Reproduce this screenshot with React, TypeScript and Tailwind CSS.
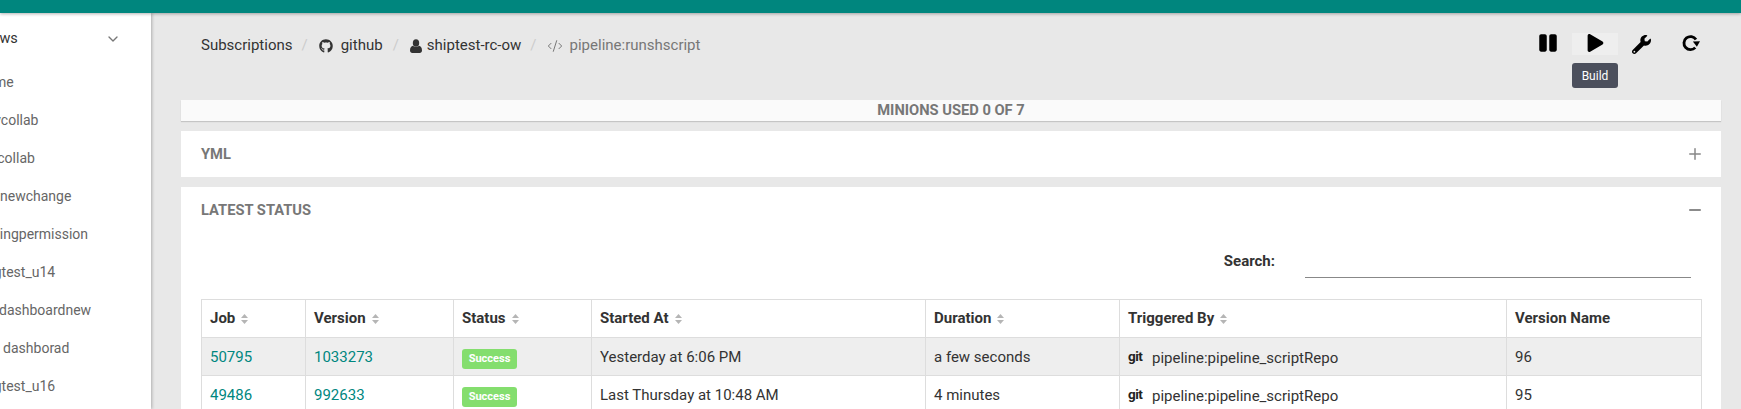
import React from 'react';
import { ChevronDown, Plus, Minus, CodeXml } from 'lucide-react';
import { FaPause, FaPlay, FaWrench, FaGithub } from 'react-icons/fa';

const navItems = [
  { label: 'Home', className: 'ml-[-24px]' },
  { label: 'mycollab', className: 'ml-[-18px]' },
  { label: 'mcollab', className: 'ml-[-15px]' },
  { label: 'newchange', className: 'ml-[0px]' },
  { label: 'testingpermission', className: 'ml-[-24px]' },
  { label: 'ngtest_u14', className: 'ml-[-14px]' },
  { label: 'dashboardnew', className: 'ml-[-1px]' },
  { label: 'a dashborad', className: 'ml-[-8px]' },
  { label: 'ngtest_u16', className: 'ml-[-14px]' },
];

const rows = [
  { job: '50795', version: '1033273', started: 'Yesterday at 6:06 PM', duration: 'a few seconds', name: '96' },
  { job: '49486', version: '992633', started: 'Last Thursday at 10:48 AM', duration: '4 minutes', name: '95' },
];

const SortIcon = () => (
  <svg width="9" height="12" viewBox="0 0 9 12" className="inline-block ml-[5px] text-[#b5b5b5]" fill="currentColor">
    <path d="M4.5 1 8 5H1z" />
    <path d="M4.5 11 1 7h7z" />
  </svg>
);

const UserIcon = () => (
  <svg width="12" height="14" viewBox="0 0 12 14" className="mr-[5px] text-[#333]" fill="currentColor">
    <ellipse cx="6" cy="4" rx="3.2" ry="3.8" />
    <path d="M0 11.5C0 8.8 1.2 7 3 6.8c.7.7 1.8 1.1 3 1.1s2.3-.4 3-1.1c1.8.2 3 2 3 4.7 0 1.6-1 2.5-2.3 2.5H2.3C1 14 0 13.100 0 11.500z" />
  </svg>
);

const RefreshIcon = () => (
  <svg width="19" height="19" viewBox="0 0 16 16" className="text-black">
    <path d="M12 12.300A5.500 5.500 0 1 1 12.600 5.500" fill="none" stroke="currentColor" strokeWidth="2.400" />
    <path d="M10 7.200 16 7 13.400 11.500z" fill="currentColor" />
  </svg>
);

const Th = ({ label, sort = true }: { label: string; sort?: boolean }) => (
  <th className="border border-[#ddd] px-[8px] text-left font-bold text-[#333] h-[38px]">
    {label}
    {sort && <SortIcon />}
  </th>
);

const Td = ({ children }: { children: React.ReactNode }) => (
  <td className="border border-[#ddd] px-[8px] pt-[2px] h-[38px]">{children}</td>
);

const App = () => {
  return (
    <div className="w-[1741px] h-[409px] overflow-hidden bg-[#e8e8e8] flex flex-col text-[15px] text-[#333] font-['Roboto',sans-serif]">
      <div className="h-[13px] shrink-0 bg-[#00867e] shadow-[0_1px_3px_rgba(0,0,0,0.3)] z-10" />

      <div className="flex flex-1 min-h-0">
        {/* sidebar */}
        <aside className="w-[151px] shrink-0 bg-white overflow-hidden shadow-[1px_0_3px_rgba(0,0,0,0.25)] text-[#666] text-[14px]">
          <div className="flex items-center justify-between h-[20px] mt-[16px] pr-[30px] text-[#333] text-[14.500px]">
            <span className="ml-[-21px]">Views</span>
            <ChevronDown className="w-[16px] h-[16px] text-[#777]" />
          </div>
          <ul className="mt-[14px]">
            {navItems.map((item) => (
              <li key={item.label} className={`h-[38px] leading-[38px] whitespace-nowrap ${item.className}`}>
                {item.label}
              </li>
            ))}
          </ul>
        </aside>

        {/* main */}
        <main className="flex-1 min-w-0 pl-[30px] pr-[20px]">
          <div className="flex justify-between h-[87px]">
            <nav className="flex items-center h-[65px] pl-[20px] text-[#333]">
              <span>Subscriptions</span>
              <span className="mx-[9px] text-[#ccc]">/</span>
              <FaGithub className="w-[14px] h-[14px] mr-[8px] ml-[2px]" />
              <span>github</span>
              <span className="mx-[10px] text-[#ccc]">/</span>
              <span className="ml-[1px]"><UserIcon /></span>
              <span>shiptest-rc-ow</span>
              <span className="mx-[9px] text-[#ccc]">/</span>
              <CodeXml className="w-[18px] h-[16px] mr-[6px] text-[#777]" strokeWidth={1.500} />
              <span className="text-[#777]">pipeline:runshscript</span>
            </nav>

            <div className="flex items-start pt-[20px] pr-[6px]">
              <button className="w-[46px] h-[22px] pb-[2px] flex items-center justify-center text-black">
                <FaPause className="w-[20px] h-[20px]" />
              </button>
              <div className="relative w-[46px] h-[22px] pb-[2px] ml-[1px] bg-[#eeeeee] flex items-center justify-center text-black">
                <FaPlay className="w-[17px] h-[18px]" />
                <div className="absolute left-0 top-[30px] w-[46px] h-[25px] rounded-[3px] bg-[#4b4f5c] text-white text-[12px] flex items-center justify-center">
                  Build
                </div>
              </div>
              <button className="w-[47px] h-[22px] flex items-center justify-center text-black">
                <FaWrench className="w-[19px] h-[19px]" />
              </button>
              <button className="w-[50px] h-[22px] pb-[3px] flex items-center justify-center">
                <RefreshIcon />
              </button>
            </div>
          </div>

          <div className="h-[21px] bg-[#fafafa] shadow-[0_1px_1px_rgba(0,0,0,0.15)] flex items-center justify-center text-[14.700px] font-bold text-[#777]">
            MINIONS USED 0 OF 7
          </div>

          <div className="mt-[10px] h-[46px] bg-white flex items-center justify-between pl-[20px] pr-[17px] text-[14.700px] font-bold text-[#777]">
            <span>YML</span>
            <Plus className="w-[18px] h-[18px] text-[#888]" />
          </div>

          <section className="mt-[10px] bg-white px-[20px] h-[300px]">
            <div className="h-[46px] flex items-center justify-between text-[14.700px] font-bold text-[#777]">
              <span>LATEST STATUS</span>
              <Minus className="w-[18px] h-[18px] text-[#666] mr-[-3px]" />
            </div>

            <div className="flex justify-end items-start h-[66px] pr-[10px]">
              <label className="font-bold text-[#333] mt-[17px] text-[15px] leading-[22px]">Search:</label>
              <div className="w-[386px] h-[45px] ml-[30px] border-b border-[#888]" />
            </div>

            <table className="w-[1500px] table-fixed border-collapse text-[15px]">
              <colgroup>
                <col className="w-[104px]" />
                <col className="w-[148px]" />
                <col className="w-[138px]" />
                <col className="w-[334px]" />
                <col className="w-[194px]" />
                <col className="w-[387px]" />
                <col className="w-[195px]" />
              </colgroup>
              <thead>
                <tr>
                  <Th label="Job" />
                  <Th label="Version" />
                  <Th label="Status" />
                  <Th label="Started At" />
                  <Th label="Duration" />
                  <Th label="Triggered By" />
                  <Th label="Version Name" sort={false} />
                </tr>
              </thead>
              <tbody>
                {rows.map((row, i) => (
                  <tr key={row.job} className={i % 2 === 0 ? 'bg-[#eeeeee]' : 'bg-white'}>
                    <Td><a className="text-[#00877f]">{row.job}</a></Td>
                    <Td><a className="text-[#00877f]">{row.version}</a></Td>
                    <Td>
                      <span className="inline-flex items-center justify-center w-[55px] h-[20px] mt-[3px] rounded-[3px] bg-[#84de6e] text-white text-[11px] font-bold">
                        Success
                      </span>
                    </Td>
                    <Td>{row.started}</Td>
                    <Td>{row.duration}</Td>
                    <Td>
                      <span className="inline-block w-[24px] font-bold text-[13.500px] tracking-[-0.500px] text-[#222] align-[2px]">git</span>
                      pipeline:pipeline_scriptRepo
                    </Td>
                    <Td>{row.name}</Td>
                  </tr>
                ))}
              </tbody>
            </table>
          </section>
        </main>
      </div>
    </div>
  );
};

export default App;
